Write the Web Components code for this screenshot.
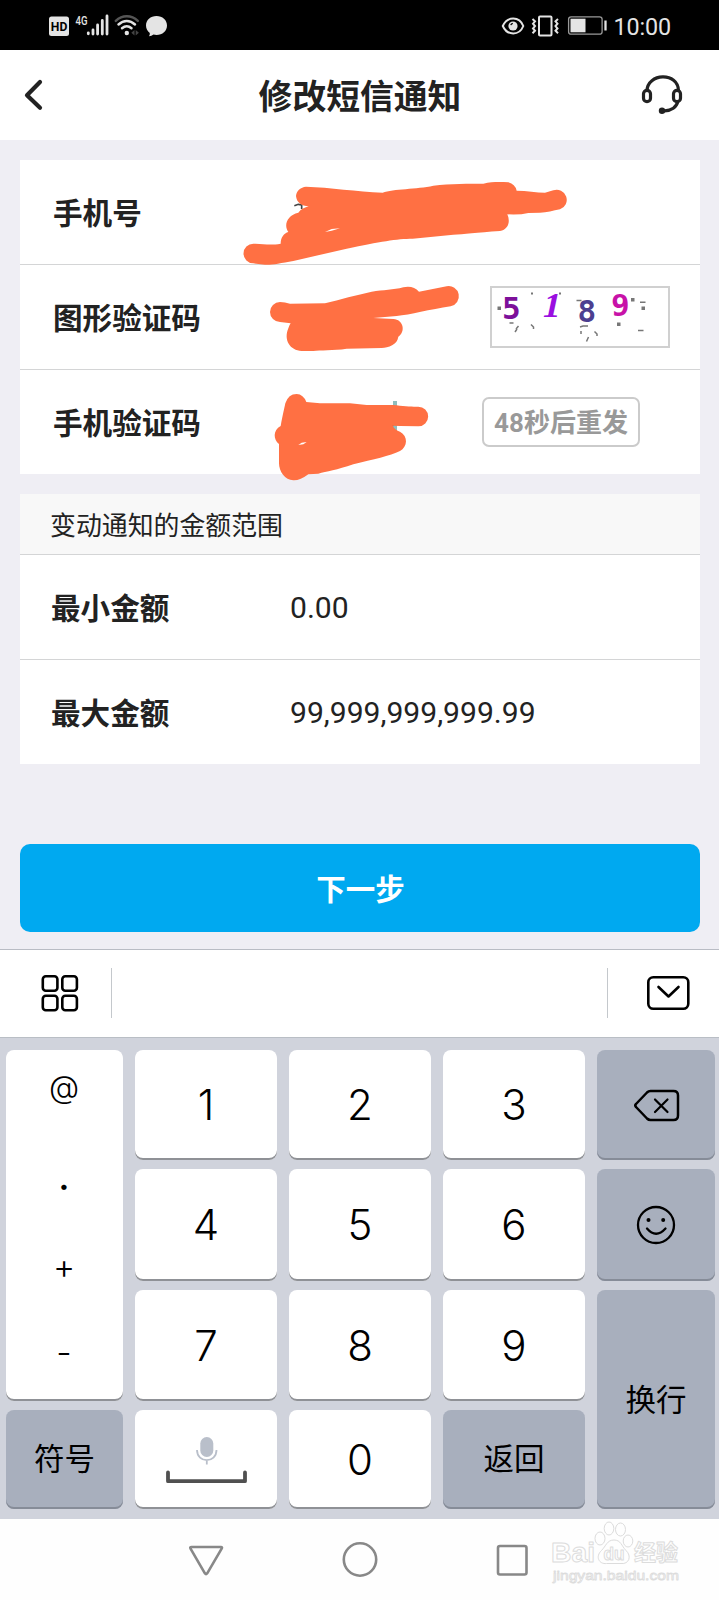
<!DOCTYPE html>
<html lang="zh-CN">
<head>
<meta charset="utf-8">
<title>修改短信通知</title>
<style>
  body {
    margin: 0;
    background: #efeef4;
    font-family: Roboto, "Noto Sans CJK SC", sans-serif;
    color: #222;
  }
</style>
</head>
<body>
<sms-screen></sms-screen>

<script>
// Registers a custom element whose shadow root is a clone of the given markup.
function define(name, html) {
  const template = document.createElement('template');
  template.innerHTML = html;
  customElements.define(name, class extends HTMLElement {
    constructor() {
      super();
      this.attachShadow({ mode: 'open' }).appendChild(template.content.cloneNode(true));
    }
  });
}

define('status-bar', `
  <style>
    :host {
      display: flex;
      align-items: center;
      justify-content: space-between;
      box-sizing: border-box;
      height: 50px;
      padding: 0 48px;
      background: #000;
      color: #e4e4e4;
    }
    svg { display: block; }
    .right { display: flex; align-items: center; gap: 6px; }
    time { font-size: 23.3px; line-height: 48px; letter-spacing: -0.1px; padding-top: 3px; }
  </style>
  <svg width="122" height="50" viewBox="48 0 122 50" fill="#e4e4e4">
    <rect x="49" y="16.5" width="20" height="19.5" rx="2.5"/>
    <text x="50.8" y="30.5" font-family="Roboto" font-size="12.5" font-weight="700" fill="#000" textLength="16.5" lengthAdjust="spacingAndGlyphs">HD</text>
    <text x="75.5" y="24.5" font-family="Roboto" font-size="13.5" font-weight="500" textLength="12" lengthAdjust="spacingAndGlyphs">4G</text>
    <g stroke="#e4e4e4" stroke-width="2.8" stroke-linecap="round">
      <path d="M88.3 32.8v1M93 30v4M97.6 25v9M102.3 20.5v13.5M107 16v18"/>
    </g>
    <g fill="none" stroke="#e4e4e4" stroke-width="2.5" stroke-linecap="round">
      <path stroke="#555" d="M115.8 20.8c6.5-6 15.5-6 22 0"/>
      <path d="M118.5 24.5c5-4.6 11.5-4.6 16.5 0M122 28.3c3-2.6 6.5-2.6 9.5 0"/>
    </g>
    <circle cx="126.8" cy="33" r="2.2"/>
    <path fill="#444" d="M134.5 30v5.5l-3.2-2.7zM135.7 30v5.5l3.2-2.7z"/>
    <path d="M156.5 16c6 0 10.5 4.1 10.5 9.5S162.5 35 156.5 35q-1.5 0-3-.4-2 1.7-4.5 1.7 1-1.7.8-3.4C147.5 31.2 146 28.6 146 25.5c0-5.4 4.5-9.5 10.5-9.5z"/>
  </svg>
  <div class="right">
    <svg width="107" height="50" viewBox="500 0 107 50" fill="none" stroke="#e4e4e4" stroke-width="2">
      <path d="M502.8 26c4.5-10 16.5-10 20.5 0-4 10-16 10-20.5 0z"/>
      <circle cx="513" cy="26" r="4.6" fill="#e4e4e4" stroke="none"/>
      <path stroke="#000" stroke-width="1.3" d="M510.8 25.2q.4-1.6 2-1.9"/>
      <rect x="539" y="16.5" width="12.5" height="19" rx="1"/>
      <path d="M532.5 19l2.5 2.3-2 2.4 2 2.4-2 2.4 2 2.3-2.5 2.5M558 19l-2.500 2.300 2 2.400-2 2.400 2 2.400-2 2.300 2.500 2.500"/>
      <rect x="568.6" y="16.8" width="33.5" height="17.4" rx="2.5" stroke="#999" stroke-width="1.3"/>
      <rect x="570.5" y="18.7" width="15" height="13.6" fill="#e4e4e4" stroke="none"/>
      <path d="M605.5 20.5v10" stroke-width="2.3"/>
    </svg>
    <time>10:00</time>
  </div>
`);

define('title-bar', `
  <style>
    :host {
      display: grid;
      grid-template-columns: 80px 1fr 80px;
      align-items: center;
      box-sizing: border-box;
      height: 90px;
      background: #fff;
    }
    h1 {
      margin: 0;
      padding: 5px 0 0 1px;
      font-size: 33.8px;
      line-height: 85px;
      font-weight: 700;
      text-align: center;
    }
    svg { display: block; }
    .help { justify-self: end; margin-right: 34px; }
  </style>
  <svg width="60" height="90" viewBox="0 50 60 90" fill="none" stroke="#222" stroke-width="4.2" stroke-linecap="round" stroke-linejoin="round">
    <path d="M40 82L27 95.3 40 107.8"/>
  </svg>
  <h1><slot></slot></h1>
  <svg class="help" width="46" height="90" viewBox="639 50 46 90" fill="none" stroke="#222" stroke-width="3.2">
    <path d="M647 91c0-18 31.5-19.5 31.5 0M678 101c-1.5 6-6.5 10-14 9.8"/>
    <rect x="643.5" y="90.3" width="7" height="11.4" rx="3.5"/>
    <rect x="673.5" y="90.3" width="7" height="11.4" rx="3.5"/>
    <circle cx="662" cy="110.8" r="3.2" fill="#222" stroke="none"/>
  </svg>
`);

define('form-card', `
  <style>
    :host { display: block; background: #fff; }
    .caption {
      display: block;
      height: 60px;
      line-height: 64px;
      padding-left: 30px;
      font-size: 25.9px;
      background: #f8f8f8;
      border-bottom: 1px solid #d4d5d6;
    }
    :host(:not([captioned])) .caption { display: none; }
  </style>
  <div class="caption"><slot name="caption"></slot></div>
  <slot></slot>
`);

define('form-row', `
  <style>
    :host {
      display: grid;
      grid-template-columns: 237px 1fr auto;
      align-items: center;
      height: 104px;
      padding-left: 33px;
      border-bottom: 1px solid #d4d5d6;
    }
    :host(:last-child) { border-bottom: 0; }
    :host([inset]) { padding-left: 31px; grid-template-columns: 239px 1fr auto; }
    .label { font-size: 29.6px; font-weight: 700; line-height: 102px; padding-top: 3px; }
    .value { font-size: 30.1px; line-height: 104px; }
  </style>
  <span class="label"><slot name="label"></slot></span>
  <span class="value"><slot></slot></span>
  <slot name="action"></slot>
`);

define('captcha-image', `
  <style>
    :host { display: block; margin: 0 30px 2px 0; border: 2px solid #d0d0d0; width: 176px; height: 58px; }
    svg { display: block; overflow: visible; }
  </style>
  <svg width="176" height="58" viewBox="492 288 176 58" font-family="DejaVu Sans Mono" font-weight="700" font-size="31">
    <text x="502" y="319" fill="#7d109a">5</text>
    <text transform="translate(541 316.5) skewX(-12)" font-family="Liberation Serif" font-size="35" fill="#9a0fe0">1</text>
    <text x="577.5" y="322" fill="#4c3f90">8</text>
    <text x="611" y="315.5" fill="#c812a8">9</text>
    <path fill="#777" d="M497.5 306.5h3.5v3.5h-3.5zM531 292.5h2v2h-2zM559 292.5h2v2h-2zM631 298h3.5v3.5H631zM641.5 306.5h3.5v3.5h-3.5zM617 322.5h3.5v3.5H617z"/>
    <path fill="none" stroke="#777" stroke-width="1.5" d="M509.5 323h4M518.5 326l-2.5 3M517 329l-2 3M531 324.5l2.5 2.5v2M576.5 300.5h5M580 327l3-1h5M581 331v3M594.5 331.5l2.5 2.5v2M588.5 337l-2 4.5M640 302.3h5.5M638 330.5h5.5"/>
  </svg>
`);

define('resend-button', `
  <style>
    :host { display: block; margin: 0 60px 2px 0; }
    button {
      display: block;
      box-sizing: border-box;
      width: 158px;
      height: 50px;
      padding: 0;
      border: 2px solid #cbcbcb;
      border-radius: 7px;
      background: #fff;
      color: #999;
      font: 700 26px/48px Roboto, "Noto Sans CJK SC", sans-serif;
      white-space: nowrap;
    }
  </style>
  <button type="button"><slot></slot></button>
`);

define('primary-button', `
  <style>
    :host { display: block; }
    button {
      display: block;
      width: 100%;
      height: 88px;
      padding: 4px 0 0 1px;
      border: 0;
      border-radius: 10px;
      background: #00a9f0;
      color: #fff;
      font: 700 29.5px/84px Roboto, "Noto Sans CJK SC", sans-serif;
    }
  </style>
  <button type="button"><slot></slot></button>
`);

// Hand-drawn marker strokes that hide the private values.
define('marker-ink', `
  <style>
    :host { position: absolute; left: 230px; top: 150px; pointer-events: none; }
    svg { display: block; }
  </style>
  <svg width="360" height="340" viewBox="0 0 1080 1020">
    <path d="M193 167l12-4 10 2v12" fill="none" stroke="#444" stroke-width="5"/>
    <path d="M489 753h12v90h-12z" fill="#8fbdbd"/>
    <path d="M476 826h14" stroke="#333" stroke-width="5"/>
    <g fill="#ff7043">
      <path d="M228 110C300 112 380 125 458 128C490 116 560 118 610 107C660 101 720 101 760 101C790 94 815 96 835 97Q855 102 860 122C890 122 920 128 945 128L970 121A29 29 0 0 1 990 178C970 182 950 188 930 188L895 189Q870 195 832 193C842 215 835 238 810 243C740 248 700 253 670 254L548 266C500 266 450 275 350 296L190 333C150 340 120 346 105 344L70 340A29 29 0 0 1 70 281C100 280 115 287 152 281C152 262 162 250 175 246C160 225 172 195 205 188C212 178 225 172 236 169C215 168 200 158 198 138C200 120 212 112 228 110Z"/>
      <path d="M150 456Q165 457 180 461L285 460C330 448 380 435 425 425C460 420 490 420 520 412Q550 406 567 425L650 409A30 30 0 0 1 662 469C600 478 540 495 500 498L430 504L490 507C520 508 528 545 505 560C502 585 475 592 455 594L350 596C310 602 270 600 250 603L215 603C180 602 160 570 175 535Q178 525 182 520L150 516A30 30 0 0 1 150 456Z"/>
      <path d="M200 732Q220 733 229 756L270 760L360 760L410 765L490 765C520 768 550 771 565 770A29 29 0 0 1 565 829L510 828L488 827Q495 840 510 845C535 858 533 890 510 903C480 918 430 928 370 943C320 960 290 965 265 971L235 973Q210 992 190 991C165 990 147 965 147 940L147 882C130 870 128 840 152 828C158 795 163 775 166 760Q175 732 200 732Z"/>
    </g>
    <path fill="#fff" d="M285 246L305 237L330 235L305 242ZM205 885L215 878L230 876L220 883Z"/>
  </svg>
`);

define('key-cap', `
  <style>
    :host {
      display: flex;
      align-items: center;
      justify-content: center;
      box-sizing: border-box;
      border-radius: 8px;
      background: #fff;
      box-shadow: inset 0 -2px 0 #8f9196;
      color: #000;
      font-family: Inter, "Noto Sans CJK SC", sans-serif;
      font-size: 42px;
      font-weight: 300;
      line-height: 1;
    }
    :host([dark]) {
      background: #a8afbd;
      box-shadow: inset 0 -2px 0 #868c98;
      font-size: 30.5px;
      font-weight: 400;
    }
    :host([tall]) { grid-row: span 2; padding-top: 2px; }
    :host([symbols]) {
      grid-row: span 3;
      flex-direction: column;
      justify-content: flex-start;
      font-size: 34px;
    }
  </style>
  <slot></slot>
`);

define('soft-keyboard', `
  <style>
    :host { display: block; border-top: 1px solid #b9bcc4; }
    svg { display: block; }
    .tools {
      display: flex;
      align-items: center;
      height: 87px;
      background: #fff;
      border-bottom: 1px solid #b9bec5;
    }
    .rule { width: 1px; height: 50px; margin-bottom: 1px; background: #c4c8cc; }
    .rule:nth-of-type(2) { margin-left: auto; }
    .keys {
      display: grid;
      grid-template-columns: 117px 142px 142px 142px 118px;
      grid-template-rows: 110px 112px 111px 99px;
      gap: 9px 12px;
      padding: 12px 4px 10px 6px;
      background: #d0d3dc;
    }
    .sym { height: 34px; line-height: 34px; padding-right: 1px; }
    .sym.at { margin-top: 20px; font-size: 31px; }
    .sym.dot { margin-top: 66px; font-weight: 600; }
    .sym.plus { margin-top: 46px; }
    .sym.minus { margin-top: 52px; }
  </style>
  <div class="tools">
    <svg width="111" height="87" viewBox="0 950 111 87" fill="none" stroke="#000" stroke-width="2.6">
      <rect x="42.8" y="976.3" width="14.6" height="14.4" rx="3"/>
      <rect x="62.3" y="976.3" width="14.6" height="14.4" rx="3"/>
      <rect x="42.8" y="995.8" width="14.6" height="14.4" rx="3"/>
      <rect x="62.3" y="995.8" width="14.6" height="14.4" rx="3"/>
    </svg>
    <div class="rule"></div>
    <div class="rule"></div>
    <svg width="111" height="87" viewBox="608 950 111 87" fill="none" stroke="#000" stroke-width="2.6" stroke-linecap="round" stroke-linejoin="round">
      <rect x="648.3" y="977.3" width="40" height="31.4" rx="5"/>
      <path d="M658.5 987l10 9.5 10-9.5"/>
    </svg>
  </div>
  <div class="keys">
    <key-cap symbols>
      <span class="sym at">@</span><span class="sym dot">·</span><span class="sym plus">+</span><span class="sym minus">-</span>
    </key-cap>
    <key-cap>1</key-cap>
    <key-cap>2</key-cap>
    <key-cap>3</key-cap>
    <key-cap dark>
      <svg width="48" height="36" viewBox="-1 0 48 36" fill="none" stroke="#000" stroke-width="2.5" stroke-linecap="round" stroke-linejoin="round">
        <path d="M17.5 4h23q4.500 0 4.500 4.500v20q0 4.500-4.500 4.500h-23q-2 0-3.500-1.500L3 20q-1.500-1.500 0-3L14 5.500q1.500-1.500 3.500-1.500z"/>
        <path stroke-width="2.2" d="M22 12.5l12.5 12.5M34.5 12.5l-12.5 12.5"/>
      </svg>
    </key-cap>
    <key-cap>4</key-cap>
    <key-cap>5</key-cap>
    <key-cap>6</key-cap>
    <key-cap dark>
      <svg width="42" height="42" viewBox="0 0 42 42" fill="none" stroke="#000" stroke-width="2.3" stroke-linecap="round">
        <circle cx="21" cy="21" r="18"/>
        <path d="M12 24.5q9 10.5 18.5 0"/>
        <circle cx="13.5" cy="16" r="2" fill="#000" stroke="none"/>
        <circle cx="28.2" cy="16" r="2" fill="#000" stroke="none"/>
      </svg>
    </key-cap>
    <key-cap>7</key-cap>
    <key-cap>8</key-cap>
    <key-cap>9</key-cap>
    <key-cap dark tall>换行</key-cap>
    <key-cap dark>符号</key-cap>
    <key-cap>
      <svg width="84" height="50" viewBox="164 1434 84 50" fill="none">
        <rect x="200.3" y="1436" width="13" height="20" rx="6.5" fill="#b9bfca"/>
        <path d="M197 1449c0 13.5 19.5 13.5 19.5 0M206.8 1459v4.5" stroke="#b9bfca" stroke-width="1.8"/>
        <path d="M168 1471.5v8.7h77v-8.7" stroke="#505050" stroke-width="3.8" stroke-linecap="round" stroke-linejoin="round"/>
      </svg>
    </key-cap>
    <key-cap>0</key-cap>
    <key-cap dark>返回</key-cap>
  </div>
`);

define('nav-bar', `
  <style>
    :host { display: block; height: 81px; background: #fefefe; }
    svg { display: block; }
  </style>
  <svg width="719" height="81" viewBox="0 1519 719 81" fill="none" stroke="#888" stroke-width="2.6" stroke-linejoin="round">
    <path d="M191.5 1547h29.5q1.5 0 .8 1.3l-14.6 25q-1.2 1.6-2.3 0l-14.5-25q-.6-1.3 1.1-1.3z"/>
    <circle cx="360" cy="1559.5" r="16.2"/>
    <rect x="498" y="1546" width="28.5" height="28.5" rx="2"/>
    <g stroke="#dcdcdc" stroke-width="1" fill="#fefefe">
      <ellipse cx="600" cy="1538.5" rx="5" ry="6.5"/>
      <ellipse cx="609" cy="1528.5" rx="4.8" ry="6.5"/>
      <ellipse cx="620.5" cy="1529.5" rx="5" ry="6.5"/>
      <ellipse cx="628" cy="1541" rx="4.8" ry="6"/>
      <path d="M614 1540c-7 0-8 6-12.5 10.5-6.5 6-2.5 14 5 13h14.5c8 1 11-7.5 5-13-4.5-4.5-5-10.500-12-10.500z"/>
      <g font-family="Liberation Sans" font-weight="700">
        <text x="551" y="1561.5" font-size="28" textLength="44" lengthAdjust="spacingAndGlyphs">Bai</text>
        <text x="603.5" y="1559.5" font-size="18" textLength="21" lengthAdjust="spacingAndGlyphs">du</text>
        <text x="634" y="1560" font-family="Noto Sans CJK SC" font-size="22" textLength="44">经验</text>
        <text x="553" y="1579.5" font-size="13.5" font-weight="400" stroke-width=".8" textLength="126" lengthAdjust="spacingAndGlyphs">jingyan.baidu.com</text>
      </g>
    </g>
  </svg>
`);

define('sms-screen', `
  <style>
    :host { display: flex; flex-direction: column; position: relative; width: 719px; height: 1600px; overflow: hidden; }
    main {
      display: flex;
      flex-direction: column;
      gap: 20px;
      box-sizing: border-box;
      height: 809px;
      padding: 20px 19px 0 20px;
    }
    primary-button { margin-top: 60px; }
  </style>
  <status-bar></status-bar>
  <title-bar>修改短信通知</title-bar>
  <main>
    <form-card>
      <form-row><span slot="label">手机号</span></form-row>
      <form-row><span slot="label">图形验证码</span><captcha-image slot="action"></captcha-image></form-row>
      <form-row><span slot="label">手机验证码</span><resend-button slot="action">48秒后重发</resend-button></form-row>
    </form-card>
    <form-card captioned>
      <span slot="caption">变动通知的金额范围</span>
      <form-row inset><span slot="label">最小金额</span>0.00</form-row>
      <form-row inset><span slot="label">最大金额</span>99,999,999,999.99</form-row>
    </form-card>
    <primary-button>下一步</primary-button>
  </main>
  <soft-keyboard></soft-keyboard>
  <nav-bar></nav-bar>
  <marker-ink></marker-ink>
`);
</script>
</body>
</html>
